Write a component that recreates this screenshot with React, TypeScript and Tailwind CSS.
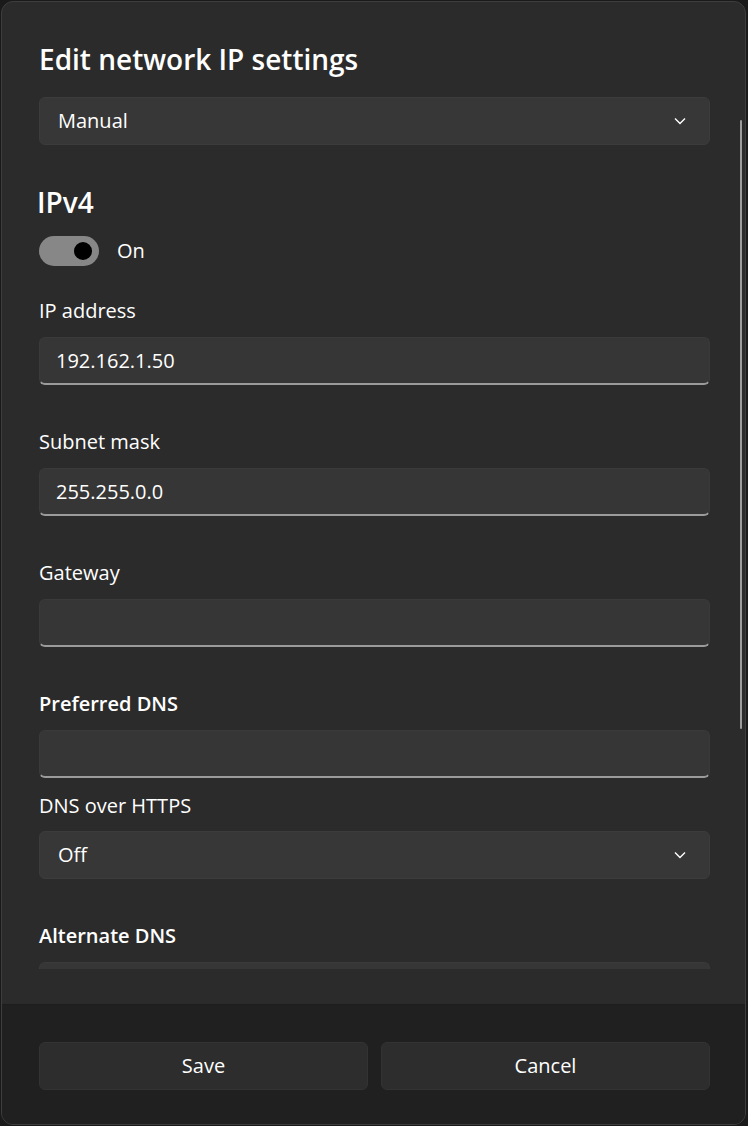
import React from "react";

const font = { fontFamily: '"Open Sans", "Noto Sans", sans-serif' };

function Chevron() {
  return (
    <svg width="12" height="8" viewBox="0 0 12 8" className="text-white">
      <polyline points="1,1.5 6,6.5 11,1.5" fill="none" stroke="currentColor" strokeWidth="1.4" />
    </svg>
  );
}

function Select({ value }: { value: string }) {
  return (
    <div className="h-[48px] rounded-[6px] bg-[#373737] border border-[#3c3c3c] flex items-center justify-between pl-[18px] pr-[23px]">
      <span className="text-[20px] text-white">{value}</span>
      <Chevron />
    </div>
  );
}

function TextBox({ value }: { value?: string }) {
  return (
    <div className="h-[48px] rounded-[6px] bg-[#363636] border border-[#3a3a3a] border-b-2 border-b-[#9b9b9b] flex items-center pl-[16px]">
      <span className="text-[20px] text-white">{value}</span>
    </div>
  );
}

function Field({ label, value, bold }: { label: string; value?: string; bold?: boolean }) {
  return (
    <div className="flex flex-col gap-[12px]">
      <div className={`h-[28px] leading-[28px] text-[20px] text-white ${bold ? "font-semibold" : ""}`}>{label}</div>
      <TextBox value={value} />
    </div>
  );
}

export default function App() {
  return (
    <div className="w-[748px] h-[1126px] bg-[#1a1a1a] pl-[1px] pr-[2px] pt-[1px] pb-[1px]" style={font}>
      <div className="h-full rounded-[12px] border border-[#3d3d3d] bg-[#2b2b2b] overflow-hidden flex flex-col">
        <div className="relative h-[1002px] pb-[35px] shrink-0">
          <div className="h-full overflow-hidden pl-[37px] pr-[35px] pt-[37px]">
            <div className="h-[40px] leading-[40px] text-[28px] font-semibold text-white">Edit network IP settings</div>
            <div className="mt-[18px]">
              <Select value="Manual" />
            </div>
            <div className="mt-[37px] -ml-[2px] h-[40px] leading-[40px] text-[28px] font-semibold text-white">IPv4</div>
            <div className="mt-[14px] flex items-center gap-[18px]">
              <div className="w-[60px] h-[30px] rounded-full bg-[#878787] flex items-center justify-end pr-[7px]">
                <div className="w-[18px] h-[18px] rounded-full bg-black" />
              </div>
              <span className="text-[20px] text-white">On</span>
            </div>
            <div className="mt-[31px] flex flex-col gap-[43px]">
              <Field label="IP address" value="192.162.1.50" />
              <Field label="Subnet mask" value="255.255.0.0" />
              <Field label="Gateway" />
              <div className="flex flex-col">
                <Field label="Preferred DNS" bold />
                <div className="mt-[14px] h-[28px] leading-[28px] text-[20px] text-white">DNS over HTTPS</div>
                <div className="mt-[11px]">
                  <Select value="Off" />
                </div>
              </div>
              <Field label="Alternate DNS" bold />
            </div>
          </div>
          <div className="absolute left-[738px] top-[118px] w-[2px] h-[609px] rounded-full bg-[#9c9c9c]" />
        </div>
        <div className="flex-1 bg-[#202020] border-t border-[#1d1d1d] pl-[37px] pr-[35px] pt-[37px] flex gap-[13px] items-start">
          <button className="flex-1 h-[48px] rounded-[6px] bg-[#2d2d2d] border border-[#333333] text-[20px] text-white">Save</button>
          <button className="flex-1 h-[48px] rounded-[6px] bg-[#2d2d2d] border border-[#333333] text-[20px] text-white">Cancel</button>
        </div>
      </div>
    </div>
  );
}
